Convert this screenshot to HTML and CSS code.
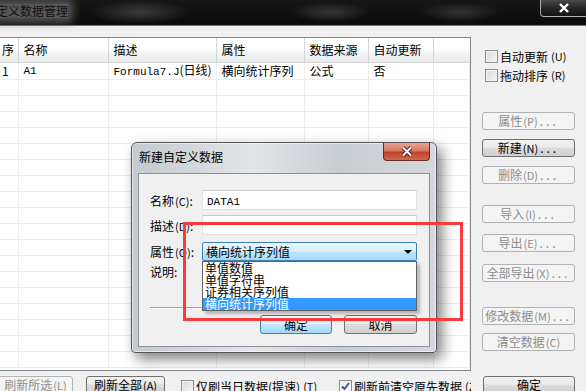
FILE: index.html
```html
<!DOCTYPE html>
<html lang="zh-CN">
  <head>
    <meta charset="UTF-8" />
    <title>自定义数据管理</title>
    <link rel="stylesheet" href="styles.css">
  </head>
  <body>
    <div class="window">
      <div class="titlebar">
        <span class="title">自定义数据管理</span>
        <span class="close-main">
          <svg width="12" height="10" viewBox="0 0 12 10"><path d="M2 1 L10 9 M10 1 L2 9" stroke="#fff" stroke-width="2.4" /></svg>
        </span>
      </div>

      <div class="client">
        <div class="list">
          <table class="grid">
            <colgroup>
              <col style="width:18px"><col style="width:90px"><col style="width:108px"><col style="width:88px"><col style="width:64px"><col style="width:65px"><col>
            </colgroup>
            <thead>
              <tr><th class="first">序</th><th>名称</th><th>描述</th><th>属性</th><th>数据来源</th><th>自动更新</th><th class="last"></th></tr>
            </thead>
            <tbody>
              <tr><td class="first">1</td><td class="mono">A1</td><td><span class="mono">Formula7.J</span>(日线)</td><td>横向统计序列</td><td>公式</td><td>否</td><td></td></tr>
              <tr><td></td><td></td><td></td><td></td><td></td><td></td><td></td></tr>
              <tr><td></td><td></td><td></td><td></td><td></td><td></td><td></td></tr>
              <tr><td></td><td></td><td></td><td></td><td></td><td></td><td></td></tr>
              <tr><td></td><td></td><td></td><td></td><td></td><td></td><td></td></tr>
              <tr><td></td><td></td><td></td><td></td><td></td><td></td><td></td></tr>
              <tr><td></td><td></td><td></td><td></td><td></td><td></td><td></td></tr>
              <tr><td></td><td></td><td></td><td></td><td></td><td></td><td></td></tr>
              <tr><td></td><td></td><td></td><td></td><td></td><td></td><td></td></tr>
              <tr><td></td><td></td><td></td><td></td><td></td><td></td><td></td></tr>
              <tr><td></td><td></td><td></td><td></td><td></td><td></td><td></td></tr>
              <tr><td></td><td></td><td></td><td></td><td></td><td></td><td></td></tr>
              <tr><td></td><td></td><td></td><td></td><td></td><td></td><td></td></tr>
              <tr><td></td><td></td><td></td><td></td><td></td><td></td><td></td></tr>
              <tr><td></td><td></td><td></td><td></td><td></td><td></td><td></td></tr>
              <tr><td></td><td></td><td></td><td></td><td></td><td></td><td></td></tr>
              <tr><td></td><td></td><td></td><td></td><td></td><td></td><td></td></tr>
              <tr><td></td><td></td><td></td><td></td><td></td><td></td><td></td></tr>
              <tr><td></td><td></td><td></td><td></td><td></td><td></td><td></td></tr>
            </tbody>
          </table>
        </div>

        <div class="side">
          <label class="check mt13"><span class="box"></span>自动更新<span class="key">(U)</span></label>
          <label class="check mt6"><span class="box"></span>拖动排序<span class="key">(R)</span></label>
          <button class="btn off mt30">属性<span class="key">(P)</span><span class="dots">...</span></button>
          <button class="btn mt9">新建<span class="key">(N)</span><span class="dots">...</span></button>
          <button class="btn off mt9">删除<span class="key">(D)</span><span class="dots">...</span></button>
          <button class="btn off mt21">导入<span class="key">(I)</span><span class="dots">...</span></button>
          <button class="btn off mt11">导出<span class="key">(E)</span><span class="dots">...</span></button>
          <button class="btn off mt12">全部导出<span class="key">(X)</span><span class="dots">...</span></button>
          <button class="btn off mt25">修改数据<span class="key">(M)</span><span class="dots">...</span></button>
          <button class="btn off mt8">清空数据<span class="key">(C)</span></button>
        </div>

        <div class="bottom">
          <button class="btn off refresh-sel">刷新所选<span class="key">(L)</span></button>
          <button class="btn refresh-all">刷新全部<span class="key">(A)</span></button>
          <label class="check today"><span class="box"></span>仅刷当日数据(提速)<span class="key">(T)</span></label>
          <label class="check"><span class="box on"><svg width="11" height="11" viewBox="0 0 11 11"><path d="M2 5.5 L4.5 8 L9 2" fill="none" stroke="#2b4f94" stroke-width="1.8" /></svg></span>刷新前清空原先数据<span class="key">(Z)</span></label>
        </div>

        <div class="ok-cell">
          <button class="btn ok">确定</button>
        </div>
      </div>

      <div class="dialog">
        <div class="dlg-head">
          <span class="dlg-title">新建自定义数据</span>
          <span class="dlg-close">
            <svg width="14" height="11" viewBox="0 0 14 11"><path d="M3 1.5 L11 9.5 M11 1.5 L3 9.5" stroke="#5a1a12" stroke-width="4" /><path d="M3 1.5 L11 9.5 M11 1.5 L3 9.5" stroke="#fff" stroke-width="2" /></svg>
          </span>
        </div>
        <div class="dlg-body">
          <div class="field-row mt16">
            <label>名称<span class="key">(C)</span>:</label>
            <div class="input"><span class="mono">DATA1</span></div>
          </div>
          <div class="field-row mt5">
            <label>描述<span class="key">(D)</span>:</label>
            <div class="input"></div>
          </div>
          <div class="field-row mt7">
            <label>属性<span class="key">(O)</span>:</label>
            <div class="select"><span>横向统计序列值</span><span class="arrow"></span></div>
          </div>
          <div class="field-row mt3 note">
            <label>说明:</label>
          </div>
          <div class="sep"></div>
          <div class="dlg-btns">
            <button class="btn focus">确定</button>
            <button class="btn">取消</button>
          </div>
        </div>
      </div>

      <ul class="dropdown">
        <li>单值数值</li>
        <li>单值字符串</li>
        <li>证券相关序列值</li>
        <li class="sel">横向统计序列值</li>
      </ul>

      <div class="mark"></div>
    </div>
  </body>
</html>
```

FILE: styles.css
```css
* {
  margin: 0;
  padding: 0;
  box-sizing: border-box;
}

body {
  width: 586px;
  height: 391px;
  overflow: hidden;
  font-family: "Noto Sans CJK SC", sans-serif;
  font-size: 12px;
  color: #000;
  background: #f0f0f0;
}

button {
  font: inherit;
}

.mono {
  font-family: "Liberation Mono", monospace;
  font-size: 11px;
}

.key {
  font-size: 11px;
  margin-left: 1px;
}

.dots {
  letter-spacing: 3px;
  margin-left: 2px;
}

.window {
  position: relative;
  width: 586px;
  height: 391px;
}

/* Title bar of the main window */
.titlebar {
  height: 26px;
  border-bottom: 1px solid #6d7090;
  display: flex;
  justify-content: space-between;
  align-items: flex-start;
  background:
    radial-gradient(ellipse 50px 12px at 140px 12px, #3a3a3a, transparent),
    radial-gradient(ellipse 40px 10px at 330px 12px, #363636, transparent),
    radial-gradient(ellipse 40px 10px at 460px 12px, #333, transparent),
    linear-gradient(#161616, #0b0b0b);
}

.titlebar .title {
  margin: 4px 0 0 -16px;
  line-height: 14px;
  color: #111;
  background: rgba(110, 110, 110, 0.75);
  box-shadow: 0 0 8px 5px rgba(110, 110, 110, 0.7);
}

.close-main {
  width: 46px;
  height: 17px;
  border: 1px solid rgba(255, 255, 255, 0.6);
  border-top: 0;
  border-right: 0;
  border-radius: 0 0 0 4px;
  background: linear-gradient(#4a4a4a, #262626 50%, #141414);
  display: flex;
  justify-content: center;
  align-items: center;
}

/* Client area */
.client {
  display: grid;
  grid-template-columns: 471px 115px;
  grid-template-rows: 334px 18px;
  row-gap: 5px;
  padding-top: 11px;
}

.list {
  border: 1px solid #828790;
  border-left: 0;
  background: #fff;
  overflow: hidden;
}

.grid {
  width: 470px;
  border-collapse: collapse;
  table-layout: fixed;
}

.grid th {
  height: 24px;
  padding-left: 5px;
  text-align: left;
  font-weight: normal;
  white-space: nowrap;
  background: linear-gradient(#ffffff, #ffffff 40%, #f3f4f5 65%, #e9eaec);
  border-bottom: 1px solid #d5d5d5;
  border-right: 1px solid #d5d5d5;
}

.grid th.last {
  border-right: 0;
}

.grid td {
  height: 16px;
  padding-left: 5px;
  line-height: 14px;
  white-space: nowrap;
  overflow: hidden;
  border-right: 1px solid #ededed;
  border-bottom: 1px solid #ededed;
}

.grid .first {
  padding-left: 2px;
}

/* Right hand panel */
.side {
  padding-left: 11px;
  display: flex;
  flex-direction: column;
  align-items: flex-start;
}

.check {
  display: flex;
  align-items: center;
  gap: 2px;
  height: 13px;
  line-height: 13px;
  white-space: nowrap;
}

.side .check {
  margin-left: 3px;
}

.box {
  width: 13px;
  height: 13px;
  flex: none;
  border: 1px solid #8e8f8f;
  background: linear-gradient(135deg, #d8d8d8, #f8f8f8);
  box-shadow: inset 0 0 0 1px #f2f2f2;
  display: flex;
  align-items: center;
  justify-content: center;
}

.box.on {
  background: linear-gradient(135deg, #e6e6e6, #fbfbfb);
}

.btn {
  width: 93px;
  height: 18px;
  border: 1px solid #707070;
  border-radius: 3px;
  background: linear-gradient(#f2f2f2, #ebebeb 45%, #dddddd 50%, #cfcfcf);
  line-height: 16px;
  text-align: center;
  white-space: nowrap;
  color: #000;
}

.btn.off {
  border-color: #adb2b5;
  background: #f4f4f4;
  color: #8d8d8d;
}

.mt3 { margin-top: 3px; }
.mt5 { margin-top: 5px; }
.mt6 { margin-top: 6px; }
.mt7 { margin-top: 7px; }
.mt8 { margin-top: 8px; }
.mt9 { margin-top: 9px; }
.mt11 { margin-top: 11px; }
.mt12 { margin-top: 12px; }
.mt13 { margin-top: 13px; }
.mt16 { margin-top: 16px; }
.mt21 { margin-top: 21px; }
.mt25 { margin-top: 25px; }
.mt30 { margin-top: 30px; }

/* Bottom row */
.bottom {
  display: flex;
  align-items: flex-start;
  overflow: hidden;
  white-space: nowrap;
}

.bottom .check {
  margin-top: 4px;
}

.refresh-sel {
  flex: none;
  width: 75px;
  margin-left: -2px;
}

.refresh-all {
  flex: none;
  width: 79px;
  margin-left: 13px;
}

.today {
  flex: none;
  width: 158px;
  margin-left: 16px;
}

.ok-cell {
  padding-left: 12px;
}

.btn.ok {
  width: 92px;
}

/* New data dialog */
.dialog {
  position: absolute;
  left: 131px;
  top: 142px;
  width: 306px;
  height: 211px;
  padding: 0 6px 5px;
  display: flex;
  flex-direction: column;
  border: 1px solid #50545a;
  border-radius: 6px 6px 4px 4px;
  background: linear-gradient(90deg, #c4c9ce, #e2e5e8 40%, #c8cdd2 68%, #d5d9dd);
  box-shadow: inset 0 0 0 1px rgba(255, 255, 255, 0.55), 5px 6px 14px rgba(0, 0, 0, 0.5);
}

.dlg-head {
  height: 30px;
  display: flex;
  justify-content: space-between;
  align-items: flex-start;
}

.dlg-title {
  padding: 7px 0 0 1px;
  line-height: 14px;
}

.dlg-close {
  width: 47px;
  height: 18px;
  border: 1px solid #6a2b22;
  border-top: 0;
  border-radius: 0 0 4px 4px;
  background: linear-gradient(#e6a493, #d57a63 45%, #c2432a 55%, #d0694c);
  display: flex;
  justify-content: center;
  align-items: center;
}

.dlg-body {
  flex: 1;
  padding: 0 12px 0 11px;
  background: #f0f0f0;
  border: 1px solid #8d9196;
}

.field-row {
  display: flex;
  align-items: center;
}

.field-row label {
  width: 52px;
  white-space: nowrap;
}

.note {
  height: 14px;
}

.input {
  width: 215px;
  height: 20px;
  padding-left: 4px;
  line-height: 18px;
  background: #fff;
  border: 1px solid #dde1e6;
  border-top-color: #c9ccd1;
}

.select {
  width: 215px;
  height: 19px;
  padding: 0 4px 0 3px;
  display: flex;
  align-items: center;
  justify-content: space-between;
  border: 1px solid #3c7fb1;
  border-radius: 2px;
  background: linear-gradient(#eaf6fd, #d9f0fc 48%, #bee6fd 52%, #a7d9f5);
}

.arrow {
  width: 0;
  height: 0;
  border-left: 4px solid transparent;
  border-right: 4px solid transparent;
  border-top: 4px solid #000;
}

.sep {
  margin-top: 29px;
  height: 2px;
  border-top: 1px solid #a0a0a0;
  border-bottom: 1px solid #fff;
}

.dlg-btns {
  margin-top: 6px;
  display: flex;
  justify-content: flex-end;
  gap: 12px;
}

.dlg-btns .btn {
  width: 73px;
  height: 19px;
}

.btn.focus {
  width: 72px;
  border-color: #3c7fb1;
  background: linear-gradient(#eaf6fd, #d9f0fc 48%, #bee6fd 52%, #a7d9f5);
}

/* Open list of the combo box */
.dropdown {
  position: absolute;
  left: 202px;
  top: 261px;
  width: 215px;
  height: 50px;
  list-style: none;
  background: #fff;
  border: 1px solid #646464;
  box-shadow: 3px 3px 3px rgba(0, 0, 0, 0.25);
}

.dropdown li {
  height: 12px;
  line-height: 12px;
  padding-left: 2px;
  white-space: nowrap;
}

.dropdown li.sel {
  background: #3399ff;
  color: #fff;
}

/* Red highlight frame */
.mark {
  position: absolute;
  left: 183px;
  top: 222px;
  width: 280px;
  height: 99px;
  border: 3px solid #fa3b3b;
}
```
